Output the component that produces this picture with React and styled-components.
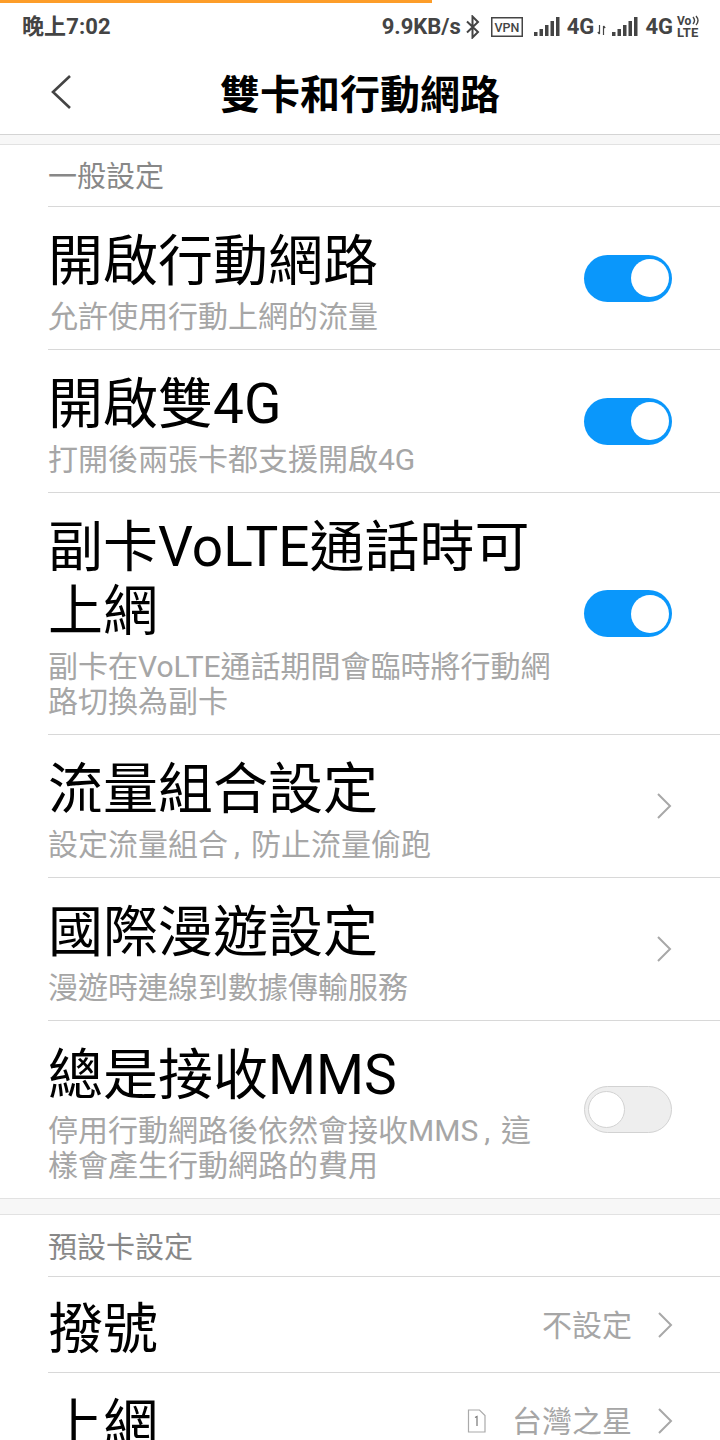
import React from 'react';
import styled, { createGlobalStyle } from 'styled-components';

const GlobalStyle = createGlobalStyle`
  html, body {
    margin: 0;
    padding: 0;
    background: #fff;
    overflow: hidden;
    height: 1440px;
  }
  * { box-sizing: border-box; }
`;

const CJK = `Roboto, "Noto Sans CJK TC", sans-serif`;

const Page = styled.div`
  width: 720px;
  height: 1440px;
  overflow: hidden;
  font-family: ${CJK};
  color: #000;
`;

const Progress = styled.div`
  width: 432px;
  height: 3px;
  background: #fd9d29;
`;

const StatusBar = styled.div`
  height: 47px;
  display: flex;
  align-items: center;
  justify-content: space-between;
  padding: 0 19px 0 22px;
  color: #444;
  font-size: 22px;
  font-weight: 700;
`;

const StatusTime = styled.span`
  padding-bottom: 5px;
  letter-spacing: 0.1px;
`;

const StatusRight = styled.div`
  display: flex;
  align-items: center;
`;

const Speed = styled.span`
  margin-right: 4px;
`;

const StatusText = styled.span`
  margin: 0 ${p => p.$right || 0}px 0 ${p => p.$left || 0}px;
`;

const VolteBadge = styled.div`
  width: 24px;
  font-size: 12px;
  font-weight: 700;
  line-height: 12px;
  display: grid;
  grid-template-columns: 15px 9px;
  align-items: center;
`;

const VolteLower = styled.span`
  grid-column: 1 / 3;
  font-size: 13px;
  letter-spacing: 0.2px;
`;

const Header = styled.div`
  height: 85px;
  display: flex;
  align-items: center;
  justify-content: center;
  position: relative;
  border-bottom: 1px solid #d4d4d4;
`;

const BackButton = styled.svg`
  position: absolute;
  left: 50px;
  top: 24px;
`;

const HeaderTitle = styled.div`
  font-size: 40px;
  font-weight: 700;
`;

const Band = styled.div`
  height: ${p => p.$h}px;
  background: #f7f7f7;
  border-bottom: 1px solid #e2e2e2;
  border-top: ${p => (p.$top ? '1px solid #e2e2e2' : 'none')};
`;

const Section = styled.div`
  padding-left: 48px;
`;

const SectionTitle = styled.div`
  height: 62px;
  display: flex;
  align-items: center;
  font-size: 29px;
  color: #888;
  border-bottom: 1px solid #d8d8d8;
  padding-bottom: ${p => p.$pb}px;
`;

const Row = styled.div`
  display: flex;
  align-items: center;
  padding: 22px 48px 15px 0;
  border-bottom: ${p => (p.$last ? 'none' : '1px solid #d8d8d8')};
`;

const RowText = styled.div`
  width: 504px;
  flex: none;
`;

const RowTitle = styled.div`
  font-size: 55px;
  line-height: 64px;
  color: #000;
`;

const RowSub = styled.div`
  font-size: 30px;
  line-height: 35px;
  color: #a6a6a6;
  margin-top: 6px;
`;

const Comma = styled.span`
  padding: 0 11px 0 6px;
`;

const RowEnd = styled.div`
  margin-left: auto;
  margin-bottom: 7px;
  display: flex;
  align-items: center;
`;

const Toggle = styled.div`
  width: 88px;
  height: 47px;
  border-radius: 24px;
  display: flex;
  align-items: center;
  justify-content: ${p => (p.$on ? 'flex-end' : 'flex-start')};
  padding: 0 ${p => (p.$on ? 3 : 3)}px;
  background: ${p => (p.$on ? '#0a97fb' : '#eeeeee')};
  border: ${p => (p.$on ? 'none' : '1px solid #d2d2d2')};
`;

const Knob = styled.div`
  width: ${p => (p.$on ? 38 : 37)}px;
  height: ${p => (p.$on ? 38 : 37)}px;
  border-radius: 50%;
  background: #fff;
  border: ${p => (p.$on ? 'none' : '1px solid #d2d2d2')};
`;

const ValueRow = styled.div`
  height: 96px;
  display: flex;
  align-items: center;
  justify-content: space-between;
  padding: 8px 47px 0 0;
  border-bottom: 1px solid #d8d8d8;
`;

const ValueTitle = styled.div`
  font-size: 55px;
  line-height: 64px;
  color: #000;
`;

const ValueEnd = styled.div`
  margin-bottom: 8px;
  display: flex;
  align-items: center;
`;

const Value = styled.span`
  font-size: 30px;
  color: #a6a6a6;
  margin: 0 25px 4px 0;
`;

const SimIcon = styled.svg`
  margin-right: 26px;
`;

const Signal = () => (
  <svg width="28" height="19" viewBox="0 0 28 19">
    <g fill="#444">
      <rect x="0" y="15" width="3.5" height="4" />
      <rect x="5.5" y="12" width="3.5" height="7" />
      <rect x="11" y="8" width="3.5" height="11" />
      <rect x="16.5" y="4" width="3.5" height="15" />
      <rect x="22" y="0" width="3.5" height="19" />
    </g>
  </svg>
);

const Chevron = () => (
  <svg width="16" height="28" viewBox="0 0 16 28">
    <path d="M2 2 L14 14 L2 26" fill="none" stroke="#a8a8a8" strokeWidth="2" />
  </svg>
);

const Switch = ({ on }) => (
  <Toggle $on={on}>
    <Knob $on={on} />
  </Toggle>
);

const SettingRow = ({ title, sub, end, last }) => (
  <Row $last={last}>
    <RowText>
      <RowTitle>{title}</RowTitle>
      <RowSub>{sub}</RowSub>
    </RowText>
    <RowEnd>{end}</RowEnd>
  </Row>
);

const App = () => (
  <Page>
    <GlobalStyle />
    <Progress />
    <StatusBar>
      <StatusTime>晚上7:02</StatusTime>
      <StatusRight>
        <Speed>9.9KB/s</Speed>
        <svg width="16" height="24" viewBox="0 0 16 24">
          <path d="M2 6.5 L13 17 L7.5 22.5 V1.5 L13 7 L2 17.5" fill="none" stroke="#444" strokeWidth="2" />
        </svg>
        <svg width="32" height="20" viewBox="0 0 32 20" style={{ marginLeft: 10 }}>
          <rect x="0.75" y="0.75" width="30.5" height="18.5" fill="none" stroke="#444" strokeWidth="1.5" />
          <text x="16" y="14.5" fontSize="12.5" fontWeight="500" fontFamily="Roboto" fill="#444" textAnchor="middle">VPN</text>
        </svg>
        <StatusText $left={11} />
        <Signal />
        <StatusText $left={5}>4G</StatusText>
        <svg width="9" height="10" viewBox="0 0 9 10" style={{ margin: '6px 6px 0 3px' }}>
          <path d="M2.5 0 V9 M0.8 7 L2.5 9 M6.5 10 V1 M8.2 3 L6.5 1" fill="none" stroke="#444" strokeWidth="1.2" />
        </svg>
        <Signal />
        <StatusText $left={5} $right={4}>4G</StatusText>
        <VolteBadge>
          <span>Vo</span>
          <svg width="8" height="11" viewBox="0 0 8 11">
            <path d="M1 2 Q4 5.5 1 9 M4 1 Q8 5.5 4 10" fill="none" stroke="#444" strokeWidth="1.4" />
          </svg>
          <VolteLower>LTE</VolteLower>
        </VolteBadge>
      </StatusRight>
    </StatusBar>
    <Header>
      <BackButton width="22" height="36" viewBox="0 0 22 36">
        <path d="M20 2 L3 18 L20 34" fill="none" stroke="#444" strokeWidth="2.6" />
      </BackButton>
      <HeaderTitle>雙卡和行動網路</HeaderTitle>
    </Header>
    <Band $h={10} />
    <Section>
      <SectionTitle $pb={3}>一般設定</SectionTitle>
      <SettingRow title="開啟行動網路" sub="允許使用行動上網的流量" end={<Switch on />} />
      <SettingRow title="開啟雙4G" sub="打開後兩張卡都支援開啟4G" end={<Switch on />} />
      <SettingRow title="副卡VoLTE通話時可上網" sub="副卡在VoLTE通話期間會臨時將行動網路切換為副卡" end={<Switch on />} />
      <SettingRow title="流量組合設定" sub={<>設定流量組合<Comma>,</Comma>防止流量偷跑</>} end={<Chevron />} />
      <SettingRow title="國際漫遊設定" sub="漫遊時連線到數據傳輸服務" end={<Chevron />} />
      <SettingRow title="總是接收MMS" sub={<>停用行動網路後依然會接收MMS<Comma>,</Comma>這樣會產生行動網路的費用</>} end={<Switch />} last />
    </Section>
    <Band $h={17} $top />
    <Section>
      <SectionTitle $pb={2}>預設卡設定</SectionTitle>
      <ValueRow>
        <ValueTitle>撥號</ValueTitle>
        <ValueEnd>
          <Value>不設定</Value>
          <Chevron />
        </ValueEnd>
      </ValueRow>
      <ValueRow>
        <ValueTitle>上網</ValueTitle>
        <ValueEnd>
          <SimIcon width="19" height="24" viewBox="0 0 19 24">
            <path d="M1.5 1 H12.5 L18 6.5 V23 H1.5 Z" fill="none" stroke="#aaa" strokeWidth="1.2" />
            <path d="M8 8.5 L10 7.5 V17" fill="none" stroke="#777" strokeWidth="1.2" />
          </SimIcon>
          <Value>台灣之星</Value>
          <Chevron />
        </ValueEnd>
      </ValueRow>
    </Section>
  </Page>
);

export default App;
